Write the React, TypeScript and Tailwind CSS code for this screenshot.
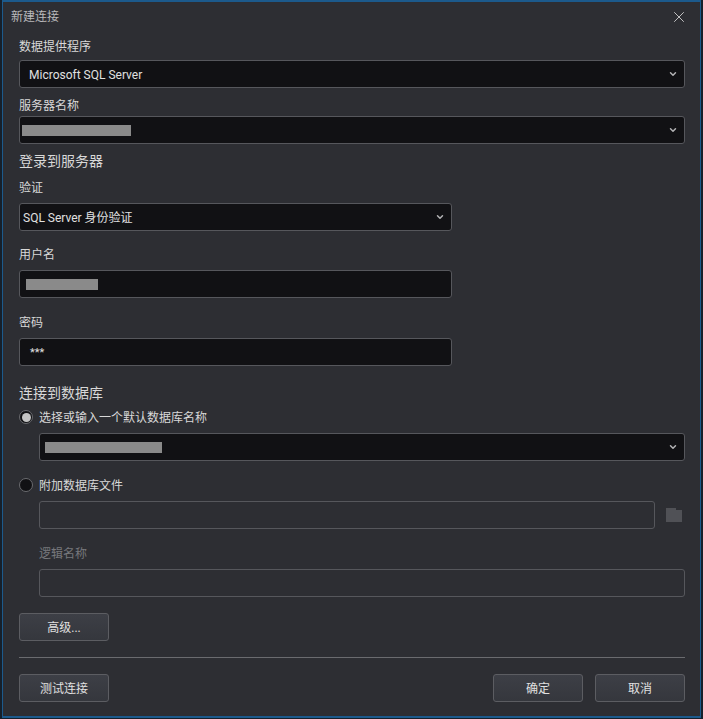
import { ChevronDown, X } from "lucide-react";

const Chevron = () => (
    <ChevronDown size={10} strokeWidth={3.5} className="text-[#b4b4b6]" />
);

const Select = (props: any) => (
    <div className={`flex items-center justify-between h-7 rounded-[3px] border border-[#56575c] bg-[#111114] text-xs text-[#e0e0e0] ${props.className}`}>
        <div className="flex items-center">{props.children}</div>
        <div className="mr-[6px]"><Chevron /></div>
    </div>
);

const Input = (props: any) => (
    <div className={`flex items-center h-7 rounded-[3px] border border-[#56575c] text-xs text-[#e0e0e0] ${props.dark ? 'bg-[#111114]' : 'bg-[#2d2e33]'} ${props.className}`}>
        {props.children}
    </div>
);

const Button = (props: any) => (
    <button className="w-[90px] h-7 pt-[2px] rounded-[3px] border border-[#5c5d62] bg-gradient-to-b from-[#3d3f46] to-[#35373d] text-xs leading-none text-[#e0e0e0]">
        {props.children}
    </button>
);

// grey bars hide the masked values in the picture
const Mask = (props: any) => <div className={`h-[11px] bg-[#8a8a8a] ${props.className}`} />;

const Radio = (props: any) => (
    <div className="flex items-center justify-center w-[14px] h-[14px] rounded-full border border-[#6a6b6f] bg-[#111114]">
        {props.checked && <div className="w-[9px] h-[9px] rounded-full bg-[#c4c4c4]" />}
    </div>
);

export default function App() {
    return (
        <main className="w-[703px] h-[719px] overflow-hidden bg-[#16202b] pl-[2px] pr-[2px] pb-[1px] font-['Roboto','Noto_Sans_CJK_SC',sans-serif]">
            <div className="w-full h-full flex flex-col border border-t-2 border-b-2 border-[#1c5a8c] bg-[#2d2e33] text-xs text-[#d8d8d8]">
                {/* title bar */}
                <div className="flex items-center justify-between h-[27px] shrink-0 pl-[8px] pr-[12px] pt-[2px] text-[#b9b9bb] text-xs">
                    <span>新建连接</span>
                    <X size={18} strokeWidth={1.1} className="text-[#e0e0e0]" />
                </div>

                <div className="flex flex-col flex-1 pl-[16px] pr-[15px]">
                    <label className="h-[31px] pt-[4px] flex items-center leading-none">数据提供程序</label>
                    <Select><span className="ml-[9px] pt-[2px] leading-none">Microsoft SQL Server</span></Select>

                    <label className="h-7 pt-[7px] flex items-center leading-none">服务器名称</label>
                    <Select><Mask className="ml-[2px] w-[109px]" /></Select>

                    <h2 className="h-[33px] pt-px flex items-center text-sm leading-none">登录到服务器</h2>
                    <label className="h-[26px] pb-[5px] flex items-center leading-none">验证</label>
                    <Select className="w-[433px]"><span className="ml-[3px] pt-[2px] leading-none">SQL Server 身份验证</span></Select>

                    <label className="h-[39px] pt-[9px] flex items-center leading-none">用户名</label>
                    <Input dark className="w-[433px]"><Mask className="ml-[6px] w-[72px]" /></Input>

                    <label className="h-[40px] pt-[10px] flex items-center leading-none">密码</label>
                    <Input dark className="w-[433px]"><span className="ml-[10px] text-[11px] leading-none">***</span></Input>

                    <h2 className="h-[39px] pt-[15px] flex items-center text-sm leading-none">连接到数据库</h2>
                    <div className="flex items-center gap-[6px] h-[28px] pb-[4px]">
                        <Radio checked />
                        <span className="pt-[2px] leading-none">选择或输入一个默认数据库名称</span>
                    </div>
                    <Select className="ml-[20px]"><Mask className="ml-[5px] w-[117px]" /></Select>

                    <div className="flex items-center gap-[6px] h-[40px] pt-[8px]">
                        <Radio />
                        <span className="pt-[2px] leading-none">附加数据库文件</span>
                    </div>
                    <div className="flex items-center ml-[20px]">
                        <Input className="flex-1" />
                        <svg width="16" height="14" viewBox="0 0 16 14" className="ml-[11px] mr-[3px] text-[#505156]">
                            <path d="M0 0h10v2h6v12H0z" fill="currentColor" />
                        </svg>
                    </div>

                    <label className="h-[40px] pt-[10px] ml-[20px] flex items-center leading-none text-[#77787c]">逻辑名称</label>
                    <Input className="ml-[20px]" />

                    <div className="mt-4"><Button>高级...</Button></div>
                    <div className="mt-4 h-px bg-[#6a6b6f]" />

                    <div className="flex items-center justify-between mt-4">
                        <Button>测试连接</Button>
                        <div className="flex gap-3">
                            <Button>确定</Button>
                            <Button>取消</Button>
                        </div>
                    </div>
                </div>
            </div>
        </main>
    );
}
